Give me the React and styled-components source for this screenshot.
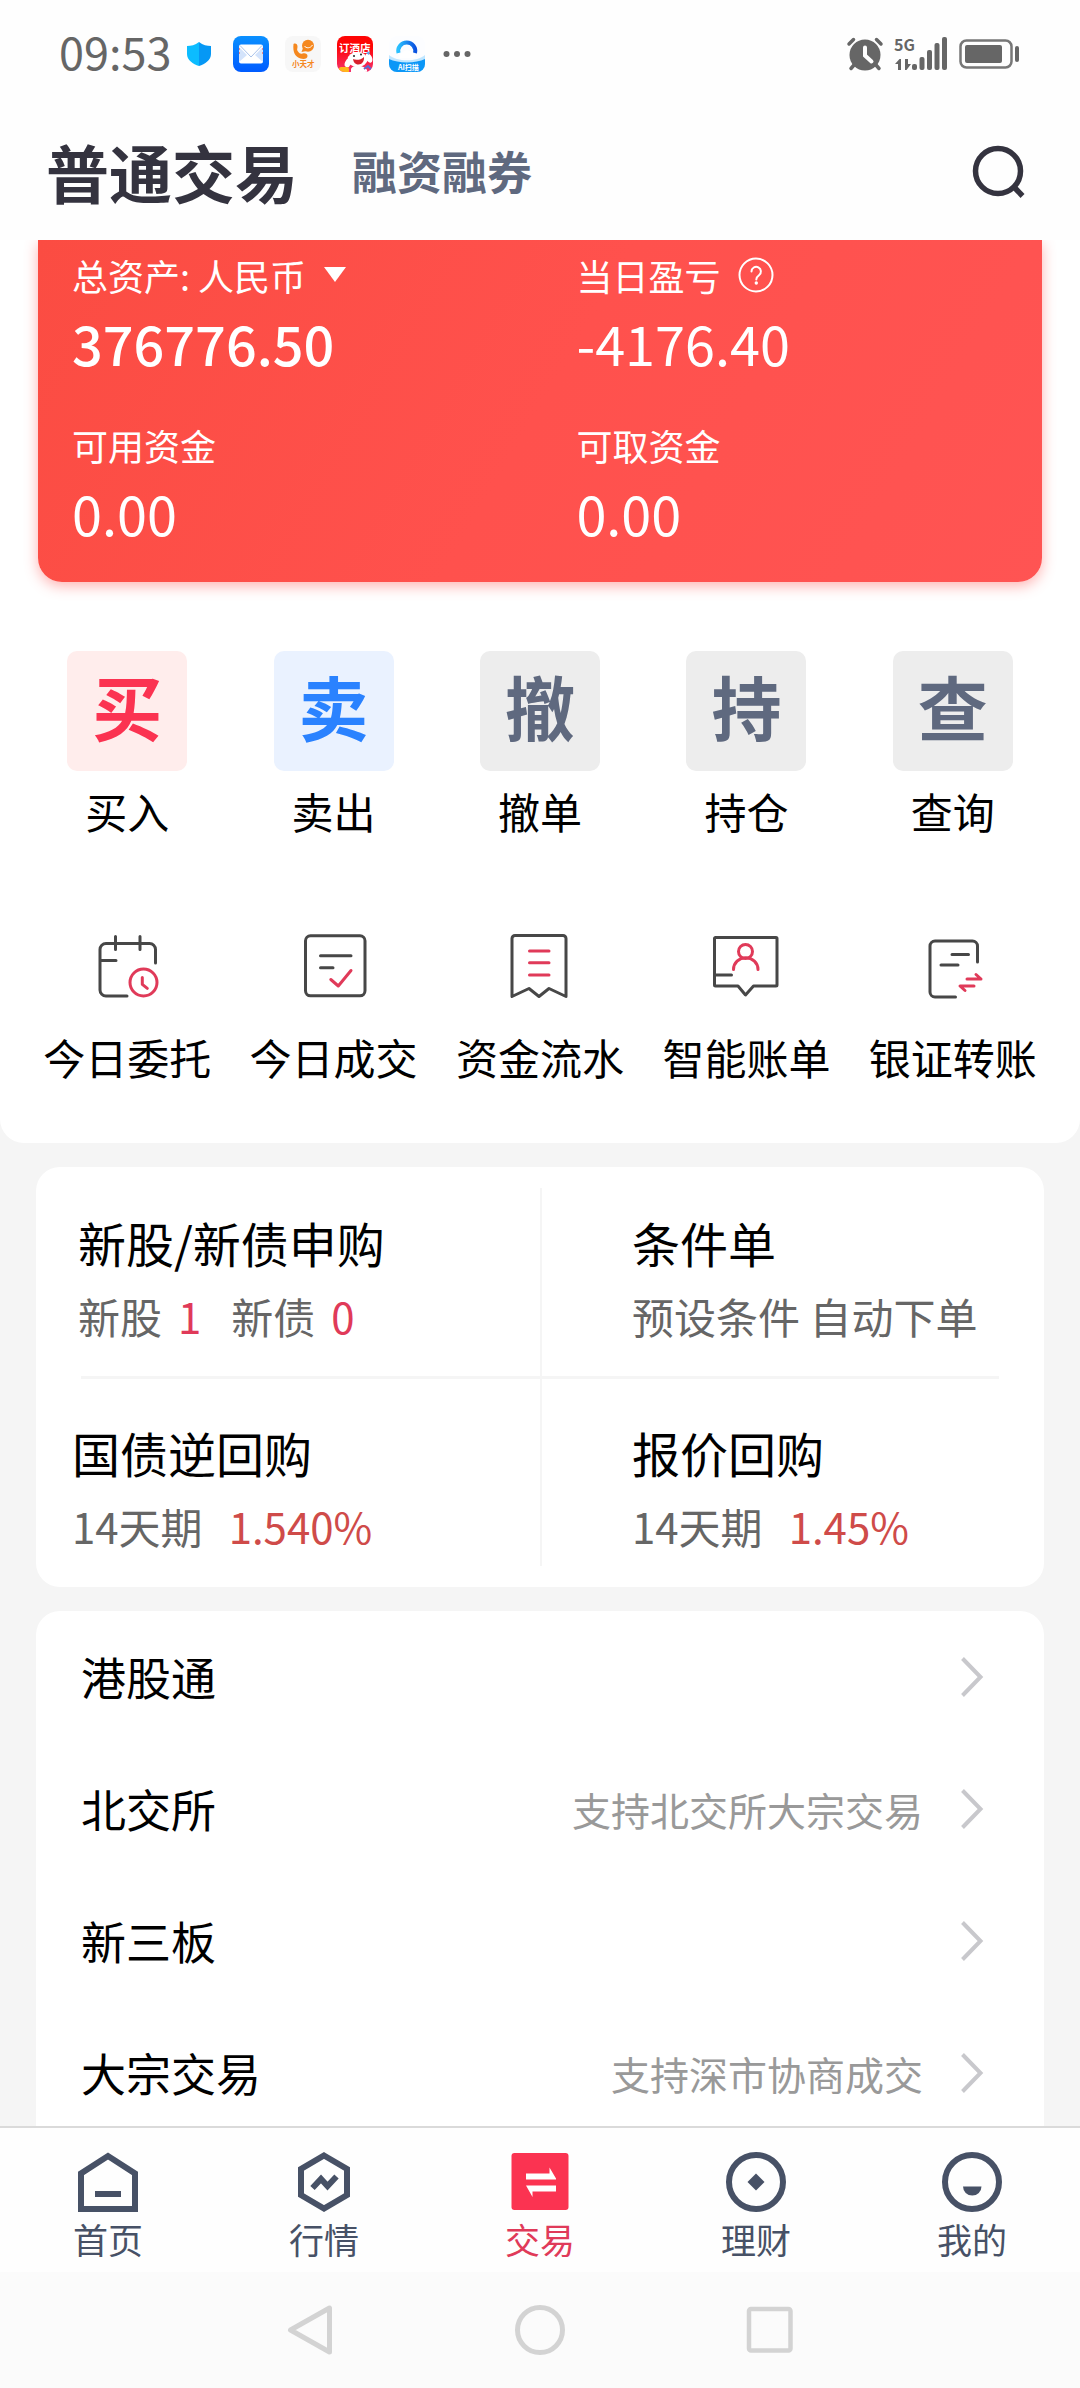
import React from "react";
import styled, { createGlobalStyle } from "styled-components";

const GlobalStyle = createGlobalStyle`
  * {
    box-sizing: border-box;
  }
  body {
    margin: 0;
    background-color: #f5f5f5;
    font-family: "Noto Sans CJK SC", sans-serif;
    color: #000;
  }
  h1, h2, p {
    margin: 0;
    font-weight: 400;
  }
  button {
    border: none;
    padding: 0;
    background: none;
    font: inherit;
    color: inherit;
    cursor: pointer;
  }
  a {
    color: inherit;
    text-decoration: none;
  }
  svg {
    display: block;
    flex: none;
    overflow: visible;
  }
`;

const Page = styled.div`
  display: flex;
  flex-direction: column;
  height: 100vh;
`;

const StatusBar = styled.div`
  display: flex;
  justify-content: space-between;
  align-items: center;
  flex: none;
  height: 108px;
  padding: 0 61px 0 59px;
  background-color: #fefefe;
  color: #666;
`;

const StatusGroup = styled.div`
  display: flex;
  align-items: center;
  gap: ${props => props.$gap}px;
`;

const Clock = styled.span`
  font-size: 45px;
  line-height: 60px;
  padding-bottom: 6px;
`;

const Header = styled.header`
  display: flex;
  align-items: center;
  flex: none;
  height: 132px;
  padding: 0 56px 6px 46px;
  background-color: #fefefe;
`;

const HeaderTab = styled.button`
  margin-right: 54px;
  font-size: ${props => (props.$active ? "63px" : "45px")};
  line-height: 80px;
  font-weight: 700;
  color: ${props => (props.$active ? "#34333f" : "#5f697f")};
`;

const SearchButton = styled.button`
  margin-left: auto;
`;

const Content = styled.main`
  flex: 1;
  min-height: 0;
  overflow-x: hidden;
  overflow-y: auto;
  &::-webkit-scrollbar {
    display: none;
  }
`;

const TopPanel = styled.section`
  padding-bottom: 58px;
  background-color: #fff;
  border-radius: 0 0 24px 24px;
`;

const AssetCard = styled.div`
  display: grid;
  grid-template-columns: 52% 48%;
  row-gap: 44px;
  margin: 0 38px;
  padding: 9px 0 37px 34px;
  border-radius: 0 0 24px 24px;
  background: linear-gradient(120deg, #fb4c42 0%, #ff514d 50%, #ff5453 100%);
  box-shadow: 0 4px 14px rgba(255, 84, 82, 0.45);
  color: #fff;
`;

const Asset = styled.div`
  display: flex;
  flex-direction: column;
  gap: 10px;
`;

const AssetLabel = styled.div`
  display: flex;
  align-items: center;
  gap: 18px;
  font-size: 36px;
  line-height: 52px;
`;

const AssetValue = styled.div`
  font-size: 54px;
  line-height: 64px;
  font-weight: ${props => (props.$strong ? 500 : 400)};
`;

const Actions = styled.nav`
  display: grid;
  grid-template-columns: repeat(5, 1fr);
  padding: 0 24px;
  margin-top: ${props => props.$top}px;
`;

const Action = styled.button`
  display: flex;
  flex-direction: column;
  align-items: center;
  gap: ${props => props.$gap}px;
  font-size: 42px;
  line-height: 56px;
  white-space: nowrap;
`;

const Tile = styled.span`
  width: 120px;
  height: 120px;
  border-radius: 10px;
  background-color: ${props => props.$bg};
  color: ${props => props.$color};
  font-size: 70px;
  line-height: 110px;
  font-weight: 700;
`;

const Card = styled.section`
  margin: 24px 36px 0;
  background-color: #fff;
  border-radius: 24px;
`;

const ProductCard = styled(Card)`
  padding: 21px 0;
`;

const ListCard = styled(Card)`
  padding-bottom: 24px;
`;

const ProductRow = styled.div`
  display: grid;
  grid-template-columns: 1fr 1fr;
`;

const ProductRule = styled.hr`
  height: 3px;
  margin: 0 45px;
  border: none;
  background-color: #f5f5f5;
`;

const Product = styled.a`
  display: flex;
  flex-direction: column;
  gap: 18px;
  padding: ${props => (props.$lower ? "43px 0 14px" : "24px 0 34px")};
  padding-left: ${props => (props.$lower ? "36px" : "42px")};
  & + & {
    padding-left: 90px;
    border-left: 2px solid #f5f5f5;
  }
`;

const ProductTitle = styled.h2`
  font-size: 48px;
  line-height: 60px;
`;

const ProductInfo = styled.p`
  display: flex;
  gap: 30px;
  font-size: 42px;
  line-height: 52px;
  color: #666;
`;

const Figure = styled.span`
  margin-left: ${props => (props.$rate ? "26px" : "16px")};
  color: ${props => (props.$rate ? "#cf4b49" : "#e03a59")};
`;

const ListItem = styled.a`
  display: flex;
  align-items: center;
  height: 132px;
  padding: 0 61px 0 45px;
`;

const ListName = styled.span`
  flex: 1;
  font-size: 45px;
  line-height: 60px;
`;

const ListNote = styled.span`
  margin-right: 38px;
  font-size: 39px;
  line-height: 60px;
  color: #999;
`;

const TabBar = styled.nav`
  display: grid;
  grid-template-columns: repeat(5, 1fr);
  flex: none;
  padding: 24px 0 11px;
  border-top: 2px solid #dadada;
  background-color: #fefefe;
`;

const Tab = styled.button`
  display: flex;
  flex-direction: column;
  align-items: center;
  gap: 5px;
  font-size: 35px;
  line-height: 44px;
  color: ${props => (props.$active ? "#e03a59" : "#475166")};
`;

const SystemNav = styled.div`
  display: flex;
  justify-content: center;
  align-items: center;
  gap: 180px;
  flex: none;
  height: 116px;
  background-color: #fbfbfb;
`;

const DARK = "#474747";
const RED = "#e03a59";

const LineIcon = ({ children }) => (
  <svg
    width="64"
    height="64"
    viewBox="0 0 64 64"
    fill="none"
    stroke={DARK}
    strokeWidth="3"
    strokeLinecap="round"
    strokeLinejoin="round"
  >
    {children}
  </svg>
);

const OrdersIcon = () => (
  <LineIcon>
    <path d="M60.5 29V15.5a6 6 0 0 0-6-6H11a6 6 0 0 0-6 6V56a6 6 0 0 0 6 6h21M20.5 2.5v13M45 2.5v13M5 26.5h16" />
    <g stroke={RED}>
      <circle cx="48.5" cy="48.5" r="13.5" />
      <path d="M47.3 43.5v6.8l5 4" />
    </g>
  </LineIcon>
);

const DealsIcon = () => (
  <LineIcon>
    <rect x="3.5" y="1.8" width="59.5" height="60" rx="5" />
    <path d="M18.5 21.7h30.5M18.5 33.7h12.5" />
    <path d="M28.8 45.5l7.5 6.5L49 36.5" stroke={RED} />
  </LineIcon>
);

const FlowIcon = () => (
  <LineIcon>
    <path d="M4 62.5V4.5a3 3 0 0 1 3-3H55a3 3 0 0 1 3 3V62.5L41 54.5l-10 8l-10-8z" />
    <path d="M21.5 17H41M21.5 28.8H41M21.5 41H41" stroke={RED} />
  </LineIcon>
);

const BillIcon = () => (
  <LineIcon>
    <path d="M1.5 3.5H62a1 1 0 0 1 1 1V51a1 1 0 0 1-1 1H39.5l-8 9l-7.5-9H1.5a1 1 0 0 1-1-1V4.5a1 1 0 0 1 1-1zM1 41h16.5" />
    <g stroke={RED}>
      <circle cx="31.5" cy="17.5" r="7" />
      <path d="M19.5 35.5a12 11.5 0 0 1 24.5 0" />
    </g>
  </LineIcon>
);

const TransferIcon = () => (
  <LineIcon>
    <path d="M56.5 28V12a5 5 0 0 0-5-5H14a5 5 0 0 0-5 5V58a5 5 0 0 0 5 5h20.5M31 20.5h16.5M20 31h17" />
    <path d="M46 45h14l-5-4.5M53 52H39l5 4.5" stroke={RED} />
  </LineIcon>
);

const Chevron = () => (
  <svg width="22" height="40" viewBox="0 0 22 40" fill="none" stroke="#c8c8cc" strokeWidth="4">
    <path d="M1.5 1.5L19.5 20L1.5 38.5" />
  </svg>
);

const TabIcon = ({ children }) => (
  <svg width="60" height="60" viewBox="0 0 60 60" fill="none" stroke="#475166" strokeWidth="6">
    {children}
  </svg>
);

const HomeIcon = () => (
  <TabIcon>
    <path d="M3 57V21.5L30 4l27 17.5V57zM17 42h26" />
  </TabIcon>
);

const MarketIcon = () => (
  <TabIcon>
    <path d="M30 3.5L53 17v26L30 56.5L7 43V17z" />
    <path d="M18.5 36l8.5-9l6.5 7l9-9.5" />
  </TabIcon>
);

const TradeIcon = () => (
  <TabIcon>
    <rect x="1.5" y="1" width="57" height="57" rx="3" fill="#fb3351" stroke="none" />
    <path
      d="M16 21.500h23.500V15.500L46 26.500v1H16zM46 39.500H22.500v5.500L16 33.500h30z"
      fill="#fff"
      stroke="none"
    />
  </TabIcon>
);

const WealthIcon = () => (
  <TabIcon>
    <circle cx="30" cy="30" r="27" />
    <path d="M30 21.5l8.5 8.5l-8.5 8.5l-8.5-8.5z" fill="#475166" stroke="none" />
  </TabIcon>
);

const MineIcon = () => (
  <TabIcon>
    <circle cx="30" cy="30" r="27" />
    <path d="M21 34.5h18.5a9.2 9 0 0 1-18.5 0z" fill="#475166" stroke="none" />
  </TabIcon>
);

const ShieldIcon = () => (
  <svg width="30" height="24" viewBox="0 0 30 24">
    <path d="M12 0c4 3 8 4 12 4v8c0 6-6 10-12 12z" fill="#0698f5" />
    <path d="M12 0C8 3 4 4 0 4v8c0 6 6 10 12 12z" fill="#0cbcff" />
  </svg>
);

const MailIcon = () => (
  <svg width="36" height="36" viewBox="0 0 36 36">
    <defs>
      <linearGradient id="mail" x1="0" y1="0" x2="0" y2="1">
        <stop offset="0" stopColor="#0a90ff" />
        <stop offset="1" stopColor="#005bff" />
      </linearGradient>
    </defs>
    <rect width="36" height="36" rx="8" fill="url(#mail)" />
    <rect x="6" y="8.5" width="24" height="19" rx="2" fill="#fff" />
    <path d="M6 11l8 8l-8 7zM30 11l-8 8l8 7z" fill="#d3e3fb" />
    <path d="M7 9.5l11 11.5l11-11.5" fill="#fff" stroke="#a9c2ea" />
    <path d="M6.5 12v8M29.5 12v8" stroke="#f28a8a" strokeDasharray="2 2" />
  </svg>
);

const PhoneIcon = () => (
  <svg width="36" height="36" viewBox="0 0 36 36">
    <rect width="36" height="36" rx="8" fill="#f7f7f7" />
    <path
      d="M8.5 8c2-1 4 0 4 2.5s-1 3 .5 5s2.5 2.5 4.500 2c2.500-.8 5 0 5 2.500s-3 3.500-7 2.500c-5-1.500-8-6-7-14.500z"
      fill="#f5881f"
    />
    <circle cx="23" cy="9.8" r="6" fill="#f5881f" />
    <path d="M18 12l-1.5 4l5-1z" fill="#f5881f" />
    <path d="M19.5 10c1.5 2.5 6 2.5 8-1" fill="none" stroke="#fff" />
    <text x="7" y="31" fontSize="7.5" fontWeight="700" fill="#f5881f">
      小天才
    </text>
  </svg>
);

const HotelIcon = () => (
  <svg width="36" height="36" viewBox="0 0 36 36">
    <defs>
      <linearGradient id="hotel" x1="0" y1="0" x2="0" y2="1">
        <stop offset="0.3" stopColor="#fe0505" />
        <stop offset="1" stopColor="#f5336f" />
      </linearGradient>
      <clipPath id="hotelClip">
        <rect width="36" height="36" rx="8" />
      </clipPath>
    </defs>
    <g clipPath="url(#hotelClip)">
      <rect width="36" height="36" fill="url(#hotel)" />
      <text x="2" y="15.5" fontSize="10.5" fontWeight="700" fill="#fff">
        订酒店
      </text>
      <path d="M14 33c1-4 12-5 16 1v3H14z" fill="#fff" />
      <ellipse cx="20.5" cy="23.5" rx="10" ry="7.5" fill="#fff" />
      <ellipse cx="32" cy="22" rx="3" ry="5" fill="#fff" transform="rotate(-25 32 22)" />
      <ellipse cx="11" cy="27" rx="3" ry="4.5" fill="#fff" transform="rotate(25 11 27)" />
      <path d="M16 23c3 1.5 8 1 11-2c.5 4-2 7.5-5.5 7.5S16.5 26 16 23z" fill="#d9202c" />
      <circle cx="17" cy="20" r="1" fill="#222" />
      <circle cx="24" cy="18.5" r="1" fill="#222" />
      <path d="M29 17l4-2l-1 4z" fill="#5aa6ee" />
      <rect x="2" y="31" width="10" height="6" rx="2" fill="#ffb61c" />
      <path d="M27 33l4-3l3 3" fill="none" stroke="#5b6ad0" strokeWidth="2" />
    </g>
  </svg>
);

const CloudIcon = () => (
  <svg width="36" height="36" viewBox="0 0 36 36">
    <defs>
      <linearGradient id="ring" x1="0" y1="0" x2="1" y2="0">
        <stop offset="0" stopColor="#2ac1ff" />
        <stop offset="1" stopColor="#0a52e0" />
      </linearGradient>
      <clipPath id="cloudClip">
        <rect width="36" height="36" rx="8" />
      </clipPath>
    </defs>
    <g clipPath="url(#cloudClip)">
      <rect width="36" height="36" fill="#fcfdff" />
      <path d="M0 19c8 7 28 7 36 0v17H0z" fill="#bfe6ff" />
      <path d="M0 23c9 4.5 27 4.5 36 0v13H0z" fill="#0c97f7" />
      <path d="M9.5 17a8.5 8.5 0 1 1 16.5 0" fill="none" stroke="url(#ring)" strokeWidth="4" />
      <path d="M10 22a4 4 0 0 1 3-5a6 6 0 0 1 10 0a3.5 3.5 0 0 1 3 5z" fill="#fff" />
      <text x="9" y="34" fontSize="7" fontWeight="700" fill="#fff">
        AI扫描
      </text>
    </g>
  </svg>
);

const DotsIcon = () => (
  <svg width="30" height="8" viewBox="0 0 30 8" fill="#666">
    <circle cx="5.5" cy="4" r="3" />
    <circle cx="16" cy="4" r="3" />
    <circle cx="26.5" cy="4" r="3" />
  </svg>
);

const AlarmIcon = () => (
  <svg width="36" height="34" viewBox="0 0 36 34" fill="none" strokeLinecap="round">
    <g stroke="#666" strokeWidth="3.5">
      <path d="M2 7l4.5-4.5M34 7l-4.5-4.5M7 28l-3 3.5M29 28l3 3.5" />
    </g>
    <circle cx="18" cy="18" r="15.5" fill="#666" />
    <path d="M18 10.5v8l6.5 6" stroke="#fefefe" strokeWidth="4" />
  </svg>
);

const SignalIcon = () => (
  <svg width="52" height="34" viewBox="0 0 52 34" fill="#666">
    <text
      x="-1"
      y="14"
      fontSize="16"
      fontWeight="700"
      fontFamily="Liberation Sans Narrow, Noto Sans CJK SC, sans-serif"
    >
      5G
    </text>
    <path d="M0 27l4.5-5H6v11H3v-6zM16 27l-4.5 6H10V22h3v5z" />
    <rect x="17" y="27" width="5" height="6" rx="2" />
    <rect x="24.5" y="20" width="5" height="13" rx="2" />
    <rect x="32" y="13" width="5" height="20" rx="2" />
    <rect x="39.5" y="6" width="5" height="27" rx="2" />
    <rect x="47" y="0" width="5" height="33" rx="2" />
  </svg>
);

const BatteryIcon = () => (
  <svg width="60" height="30" viewBox="0 0 60 30">
    <rect x="1.5" y="1.5" width="51" height="27" rx="6" fill="none" stroke="#777" strokeWidth="2.5" />
    <rect x="6" y="6" width="37" height="18" rx="2" fill="#666" />
    <rect x="56" y="7" width="4" height="16" rx="2" fill="#666" />
  </svg>
);

const HelpIcon = () => (
  <svg width="36" height="36" viewBox="0 0 36 36" fill="none" stroke="#fff">
    <circle cx="18" cy="18" r="16.5" strokeWidth="2" />
    <path
      d="M13.5 14.5a4.7 4.7 0 1 1 7.5 3.800c-1.800 1.300-2.700 2-2.700 4.200"
      strokeWidth="2"
      strokeLinecap="round"
    />
    <circle cx="18.3" cy="26" r="1.7" fill="#fff" stroke="none" />
  </svg>
);

const trades = [
  { mark: "买", name: "买入", bg: "#ffedec", color: "#fb3351" },
  { mark: "卖", name: "卖出", bg: "#eaf2ff", color: "#2a82ff" },
  { mark: "撤", name: "撤单", bg: "#ededed", color: "#5f697f" },
  { mark: "持", name: "持仓", bg: "#ededed", color: "#5f697f" },
  { mark: "查", name: "查询", bg: "#ededed", color: "#5f697f" }
];

const services = [
  { name: "今日委托", Icon: OrdersIcon },
  { name: "今日成交", Icon: DealsIcon },
  { name: "资金流水", Icon: FlowIcon },
  { name: "智能账单", Icon: BillIcon },
  { name: "银证转账", Icon: TransferIcon }
];

const markets = [
  { name: "港股通" },
  { name: "北交所", note: "支持北交所大宗交易" },
  { name: "新三板" },
  { name: "大宗交易", note: "支持深市协商成交" }
];

const tabs = [
  { name: "首页", Icon: HomeIcon },
  { name: "行情", Icon: MarketIcon },
  { name: "交易", Icon: TradeIcon, active: true },
  { name: "理财", Icon: WealthIcon },
  { name: "我的", Icon: MineIcon }
];

export default function App() {
  return (
    <Page>
      <GlobalStyle />
      <StatusBar>
        <StatusGroup $gap={16}>
          <Clock>09:53</Clock>
          <ShieldIcon />
          <MailIcon />
          <PhoneIcon />
          <HotelIcon />
          <CloudIcon />
          <DotsIcon />
        </StatusGroup>
        <StatusGroup $gap={12}>
          <AlarmIcon />
          <SignalIcon />
          <BatteryIcon />
        </StatusGroup>
      </StatusBar>

      <Header>
        <HeaderTab $active>普通交易</HeaderTab>
        <HeaderTab>融资融券</HeaderTab>
        <SearchButton aria-label="搜索">
          <svg width="52" height="52" viewBox="0 0 52 52" fill="none" stroke="#34333f" strokeWidth="5.5">
            <circle cx="26" cy="26" r="22.5" />
            <path d="M42 42l8.5 9" />
          </svg>
        </SearchButton>
      </Header>

      <Content>
        <TopPanel>
          <AssetCard>
            <Asset>
              <AssetLabel>
                总资产: 人民币
                <svg width="22" height="16" viewBox="0 0 22 16" fill="#fff">
                  <path d="M0 0h22L11 15z" />
                </svg>
              </AssetLabel>
              <AssetValue $strong>376776.50</AssetValue>
            </Asset>
            <Asset>
              <AssetLabel>
                当日盈亏
                <HelpIcon />
              </AssetLabel>
              <AssetValue>-4176.40</AssetValue>
            </Asset>
            <Asset>
              <AssetLabel>可用资金</AssetLabel>
              <AssetValue>0.00</AssetValue>
            </Asset>
            <Asset>
              <AssetLabel>可取资金</AssetLabel>
              <AssetValue>0.00</AssetValue>
            </Asset>
          </AssetCard>

          <Actions $top={69}>
            {trades.map(({ mark, name, bg, color }) => (
              <Action key={name} $gap={12}>
                <Tile $bg={bg} $color={color}>
                  {mark}
                </Tile>
                {name}
              </Action>
            ))}
          </Actions>

          <Actions $top={95}>
            {services.map(({ name, Icon }) => (
              <Action key={name} $gap={31}>
                <Icon />
                {name}
              </Action>
            ))}
          </Actions>
        </TopPanel>

        <ProductCard>
          <ProductRow>
            <Product href="#ipo">
              <ProductTitle>新股/新债申购</ProductTitle>
              <ProductInfo>
                <span>
                  新股<Figure>1</Figure>
                </span>
                <span>
                  新债<Figure>0</Figure>
                </span>
              </ProductInfo>
            </Product>
            <Product href="#condition">
              <ProductTitle>条件单</ProductTitle>
              <ProductInfo>预设条件 自动下单</ProductInfo>
            </Product>
          </ProductRow>
          <ProductRule />
          <ProductRow>
            <Product href="#reverse-repo" $lower>
              <ProductTitle>国债逆回购</ProductTitle>
              <ProductInfo>
                <span>
                  14天期<Figure $rate>1.540%</Figure>
                </span>
              </ProductInfo>
            </Product>
            <Product href="#quote-repo" $lower>
              <ProductTitle>报价回购</ProductTitle>
              <ProductInfo>
                <span>
                  14天期<Figure $rate>1.45%</Figure>
                </span>
              </ProductInfo>
            </Product>
          </ProductRow>
        </ProductCard>

        <ListCard>
          {markets.map(({ name, note }) => (
            <ListItem key={name} href="#market">
              <ListName>{name}</ListName>
              {note && <ListNote>{note}</ListNote>}
              <Chevron />
            </ListItem>
          ))}
        </ListCard>
      </Content>

      <TabBar>
        {tabs.map(({ name, Icon, active }) => (
          <Tab key={name} $active={active}>
            <Icon />
            {name}
          </Tab>
        ))}
      </TabBar>

      <SystemNav>
        <svg width="50" height="50" viewBox="0 0 50 50" fill="none" stroke="#d3d3d3" strokeWidth="5" strokeLinejoin="round">
          <path d="M44.5 3v44L5.5 25z" />
        </svg>
        <svg width="50" height="50" viewBox="0 0 50 50" fill="none" stroke="#d3d3d3" strokeWidth="5">
          <circle cx="25" cy="25" r="22.5" />
        </svg>
        <svg width="50" height="50" viewBox="0 0 50 50" fill="none" stroke="#d3d3d3" strokeWidth="4.5">
          <rect x="4" y="4" width="41.5" height="41.5" rx="2" />
        </svg>
      </SystemNav>
    </Page>
  );
}
